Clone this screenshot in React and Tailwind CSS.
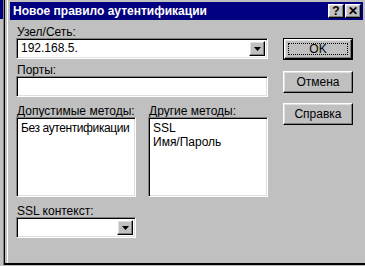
import React from 'react';

const font = "font-['Liberation_Sans',Arial,sans-serif]";

const Raised = ({ className = '', children }) => (
  <div
    className={`border border-t-white border-l-white border-r-black border-b-black bg-[#c0c0c0] shadow-[inset_-1px_-1px_0_#808080,inset_1px_1px_0_#dfdfdf] ${className}`}
  >
    {children}
  </div>
);

const Sunken = ({ className = '', children }) => (
  <div
    className={`border border-t-[#808080] border-l-[#808080] border-r-white border-b-white bg-white shadow-[inset_1px_1px_0_#000,inset_-1px_-1px_0_#dfdfdf] ${className}`}
  >
    {children}
  </div>
);

const Arrow = () => (
  <svg width="7" height="4" viewBox="0 0 7 4">
    <path d="M0 0h7L3.5 4z" fill="#000" />
  </svg>
);

const Combo = ({ value, className = '' }) => (
  <Sunken className={`flex h-[21px] items-stretch p-[2px] ${className}`}>
    <div className="flex-1 pl-[2px] text-[12px] leading-[15px] text-black">{value}</div>
    <Raised className="flex w-[16px] items-center justify-center">
      <Arrow />
    </Raised>
  </Sunken>
);

const Label = ({ children, className = '' }) => (
  <div className={`h-[12px] whitespace-nowrap pl-px text-[12px] leading-[12px] text-black ${className}`}>
    {children}
  </div>
);

const Button = ({ children, isDefault }) =>
  isDefault ? (
    <div className="h-[22px] w-[70px] border border-black">
      <Raised className="flex h-full items-center justify-center p-[3px]">
        <div className="flex h-full w-full items-center justify-center border border-dotted border-black text-[12px] text-black">
          {children}
        </div>
      </Raised>
    </div>
  ) : (
    <Raised className="flex h-[22px] w-[70px] items-center justify-center text-[12px] text-black">
      {children}
    </Raised>
  );

const TitleButton = ({ children }) => (
  <Raised className="flex h-[14px] w-[16px] items-center justify-center text-[12px] font-bold leading-none text-black">
    {children}
  </Raised>
);

export default function App() {
  return (
    <div className={`flex h-[266px] w-[365px] flex-col overflow-hidden bg-[#c0c0c0] ${font}`}>
      <div className="flex h-[265px]">
        {/* window behind */}
        <div className="flex w-[3px] flex-col">
          <div className="h-[19px] bg-[#000080]" />
          <div className="flex-1 bg-[#c0c0c0]" />
        </div>
        <div className="w-px bg-[#808080]" />
        <div className="w-px bg-black" />

        {/* dialog */}
        <div className="flex flex-1 flex-col border-b-2 border-b-black pl-[2px]">
          <div className="flex flex-1 flex-col border-l border-l-white pl-px pt-[2px]">
            {/* title bar */}
            <div className="ml-px mr-[2px] flex h-[18px] items-center bg-[#000080] pl-[3px] pr-[2px]">
              <span className="flex-1 text-[12px] font-bold leading-none text-white">
                Новое правило аутентификации
              </span>
              <div className="flex gap-[1px]">
                <TitleButton>?</TitleButton>
                <TitleButton>✕</TitleButton>
              </div>
            </div>

            {/* body */}
            <div className="flex pl-[7px]">
              <div className="flex w-[252px] flex-col pt-[6px]">
                <Label>Узел/Сеть:</Label>
                <Combo value="192.168.5." />

                <Label className="mt-[5px]">Порты:</Label>
                <Sunken className="h-[21px]" />

                <div className="mt-[8px] flex gap-[12px]">
                  <div className="flex w-[120px] flex-col">
                    <Label>Допустимые методы:</Label>
                    <Sunken className="h-[80px] whitespace-nowrap px-[4px] pt-[3px] text-[12px] leading-[14px] tracking-[-0.4px] text-black">
                      Без аутентификации
                    </Sunken>
                  </div>
                  <div className="flex w-[120px] flex-col">
                    <Label>Другие методы:</Label>
                    <Sunken className="h-[80px] whitespace-nowrap px-[4px] pt-[3px] text-[12px] leading-[14px] text-black">
                      <div>SSL</div>
                      <div>Имя/Пароль</div>
                    </Sunken>
                  </div>
                </div>

                <Label className="mt-[8px]">SSL контекст:</Label>
                <Combo className="w-[120px]" />
              </div>

              <div className="ml-[15px] flex flex-col pt-[18px]">
                <Button isDefault>OK</Button>
                <div className="h-[11px]" />
                <Button>Отмена</Button>
                <div className="h-[10px]" />
                <Button>Справка</Button>
              </div>
            </div>
          </div>
        </div>
      </div>
    </div>
  );
}
